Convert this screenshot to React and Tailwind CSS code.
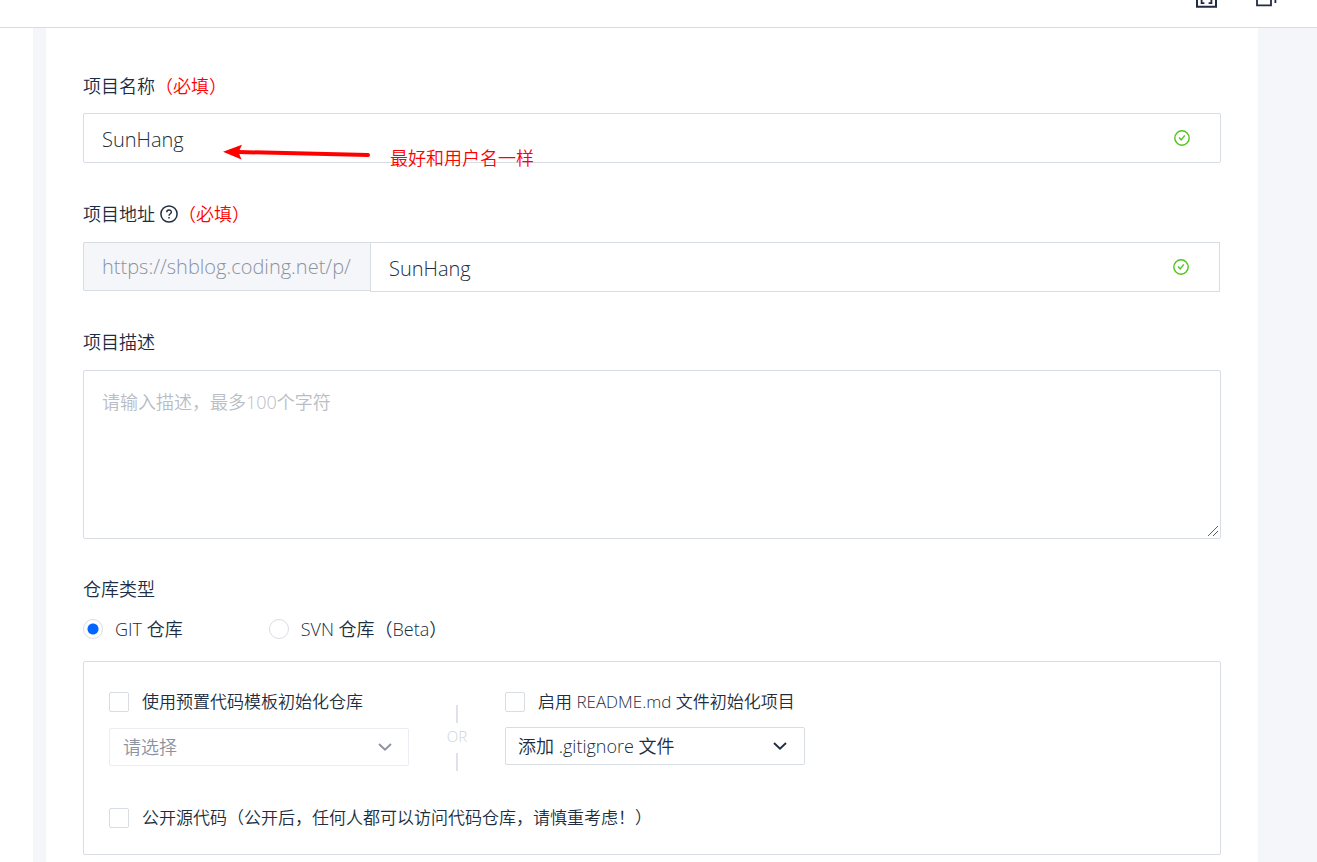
import { useState } from "react";

const labelText = "flex items-center h-7 text-[18px] leading-7";
const boxBorder = "border border-[#d8dde4]";

function CheckCircle() {
  return (
    <svg className="size-4 shrink-0" viewBox="0 0 16 16" fill="none" stroke="#52c41a" aria-hidden="true">
      <circle cx="8" cy="8" r="7.2" strokeWidth="1.4" />
      <path d="M5.1 7.5 L7.2 10 L10.8 5.4" strokeWidth="1.4" />
    </svg>
  );
}

function HelpIcon() {
  return (
    <svg className="ml-[5px] size-[18px] shrink-0" viewBox="0 0 18 18" fill="none" stroke="#202d40" aria-hidden="true">
      <circle cx="9" cy="9" r="8.1" strokeWidth="1.5" />
      <path d="M6.7 7.3 C6.7 4.2 11.4 4.3 11.4 7 C11.4 8.7 9 8.7 9 10.7" strokeWidth="1.4" />
      <path d="M9 12 V13.6" strokeWidth="1.5" />
    </svg>
  );
}

function Chevron({ className }) {
  return (
    <svg className={className} viewBox="0 0 14 8" fill="none" strokeWidth="1.9" aria-hidden="true">
      <path d="M1 1 L7 6.6 L13 1" />
    </svg>
  );
}

function Required() {
  return <span className="text-[#ff0000]">（必填）</span>;
}

function CheckRow({ id, children, className = "" }) {
  return (
    <div className={`flex items-center gap-[13px] ${className}`}>
      <input
        id={id}
        type="checkbox"
        className="size-5 shrink-0 appearance-none rounded-[2px] border border-[#d8dde4] bg-white checked:bg-[#0066ff]"
      />
      <label htmlFor={id} className="whitespace-nowrap text-[17px] leading-6">{children}</label>
    </div>
  );
}

function RadioRow({ id, checked, onChange, children }) {
  return (
    <div className="flex items-center gap-3">
      <input
        id={id}
        type="radio"
        name="repo-type"
        checked={checked}
        onChange={onChange}
        className="size-5 shrink-0 appearance-none rounded-full border border-[#d8dde4] bg-white checked:bg-[radial-gradient(circle,#0066ff_5px,#ffffff_6px)]"
      />
      <label htmlFor={id} className="text-[18px] leading-5">{children}</label>
    </div>
  );
}

export default function App() {
  const [name, setName] = useState("SunHang");
  const [path, setPath] = useState("SunHang");
  const [repo, setRepo] = useState("git");

  return (
    <div className="flex min-h-screen flex-col bg-white font-['Open_Sans','Noto_Sans_CJK_SC',sans-serif] font-[350] text-[#202d40]">
      <header className="flex h-7 shrink-0 items-start justify-end gap-[39px] border-b border-[#d8dbe2] pr-10">
        <button type="button" aria-label="项目">
          <svg className="block h-2 w-[21px]" viewBox="0 0 21 8" fill="none" stroke="#202d40" strokeWidth="2">
            <path d="M1 0 V6.8 H20 V0" />
            <path d="M5.6 0 V3.2 H8.4 M15.4 0 V3.2 H12.6" strokeWidth="1.8" />
          </svg>
        </button>
        <button type="button" aria-label="窗口">
          <svg className="block h-2 w-[21px]" viewBox="0 0 21 8" fill="none" stroke="#202d40" strokeWidth="1.8">
            <path d="M1 0 V5.4 H15 V0" />
            <path d="M19.4 0 V3" />
          </svg>
        </button>
      </header>

      <div className="flex grow bg-[#f4f6fa]">
        <aside className="w-[33px] shrink-0 bg-white" />
        <main className="ml-[13px] mr-[59px] min-w-0 grow bg-white px-[37px] pt-11">
          <form>
            <label htmlFor="name" className={labelText}>项目名称<Required /></label>
            <div className={`relative mt-[13px] flex h-[50px] items-center rounded-[2px] pr-[30px] ${boxBorder}`}>
              <input
                id="name"
                value={name}
                onChange={(e) => setName(e.target.value)}
                className="h-full min-w-0 grow bg-transparent px-[18px] pt-[2px] text-[20px] outline-none"
              />
              <CheckCircle />
              <div className="pointer-events-none absolute left-[139px] top-[30px] flex items-start gap-5">
                <svg className="h-4 w-[147px]" viewBox="0 0 147 16" aria-hidden="true">
                  <path d="M15 8 L145 11" stroke="#ff0000" strokeWidth="4" strokeLinecap="round" />
                  <path d="M0 7.8 L19 0.8 L15.5 8.2 L18.5 15.5 Z" fill="#ff0000" />
                </svg>
                <span className="whitespace-nowrap text-[18px] leading-7 text-[#ff0000]">最好和用户名一样</span>
              </div>
            </div>

            <label htmlFor="path" className={`mt-[37px] ${labelText}`}>项目地址<HelpIcon /><Required /></label>
            <div className="mr-px mt-[14px] flex items-start">
              <span className="h-[49px] w-[287px] shrink-0 whitespace-nowrap rounded-l-[2px] border border-r-0 border-[#d8dde4] bg-[#f4f6fa] px-[18px] text-[20px] leading-[48px] text-[#8c939f]">
                https://shblog.coding.net/p/
              </span>
              <div className={`flex h-[50px] min-w-0 grow items-center pr-[30px] ${boxBorder}`}>
                <input
                  id="path"
                  value={path}
                  onChange={(e) => setPath(e.target.value)}
                  className="h-full min-w-0 grow bg-transparent px-[18px] pt-[2px] text-[20px] outline-none"
                />
                <CheckCircle />
              </div>
            </div>

            <label htmlFor="description" className={`mt-9 ${labelText}`}>项目描述</label>
            <div className="relative mt-[14px]">
              <textarea
                id="description"
                placeholder="请输入描述，最多100个字符"
                className={`block h-[169px] w-full resize-none rounded-[2px] px-[18px] py-[17px] text-[18px] leading-7 outline-none placeholder:text-[#b9bdc5] ${boxBorder}`}
              />
              <svg className="pointer-events-none absolute bottom-[2px] right-[2px] size-3" viewBox="0 0 12 12" stroke="#5a5d63" strokeWidth="1" aria-hidden="true">
                <path d="M1 11 L11 1 M6 11 L11 6" />
              </svg>
            </div>

            <fieldset className="mt-9">
              <legend className={labelText}>仓库类型</legend>
              <div className="mt-4 flex gap-[86px]">
                <RadioRow id="git" checked={repo === "git"} onChange={() => setRepo("git")}>GIT 仓库</RadioRow>
                <RadioRow id="svn" checked={repo === "svn"} onChange={() => setRepo("svn")}>SVN 仓库（Beta）</RadioRow>
              </div>
            </fieldset>

            <section className={`mt-[22px] rounded-[2px] px-[25px] pb-6 pt-7 ${boxBorder}`}>
              <div className="flex">
                <div className="w-[300px]">
                  <CheckRow id="template">使用预置代码模板初始化仓库</CheckRow>
                  <div className="relative mt-[14px]">
                    <select
                      aria-label="代码模板"
                      className="h-[38px] w-full appearance-none rounded-[2px] border border-[#eaedf1] bg-white pl-[13px] text-[18px] text-[#8c939f]"
                    >
                      <option>请选择</option>
                    </select>
                    <Chevron className="pointer-events-none absolute right-[17px] top-[15px] h-2 w-[14px] stroke-[#8c939f]" />
                  </div>
                </div>
                <div className="flex w-24 flex-col items-center pt-[15px] text-[15px] text-[#cdd3dc]">
                  <span className="h-[18px] w-[2px] bg-[#dfe2e8]" />
                  <span className="pb-[4px] leading-[26px]">OR</span>
                  <span className="h-[18px] w-[2px] bg-[#dfe2e8]" />
                </div>
                <div className="w-[300px]">
                  <CheckRow id="readme">启用 README.md 文件初始化项目</CheckRow>
                  <div className="relative mt-[13px]">
                    <select
                      aria-label=".gitignore"
                      className="h-[38px] w-full appearance-none rounded-[2px] border border-[#d8dde4] bg-white pl-3 text-[18px]"
                    >
                      <option>添加 .gitignore 文件</option>
                    </select>
                    <Chevron className="pointer-events-none absolute right-[18px] top-[15px] h-2 w-[14px] stroke-[#202d40]" />
                  </div>
                </div>
              </div>
              <CheckRow id="public" className="mt-[35px]">公开源代码（公开后，任何人都可以访问代码仓库，请慎重考虑！）</CheckRow>
            </section>
          </form>
        </main>
      </div>
    </div>
  );
}
